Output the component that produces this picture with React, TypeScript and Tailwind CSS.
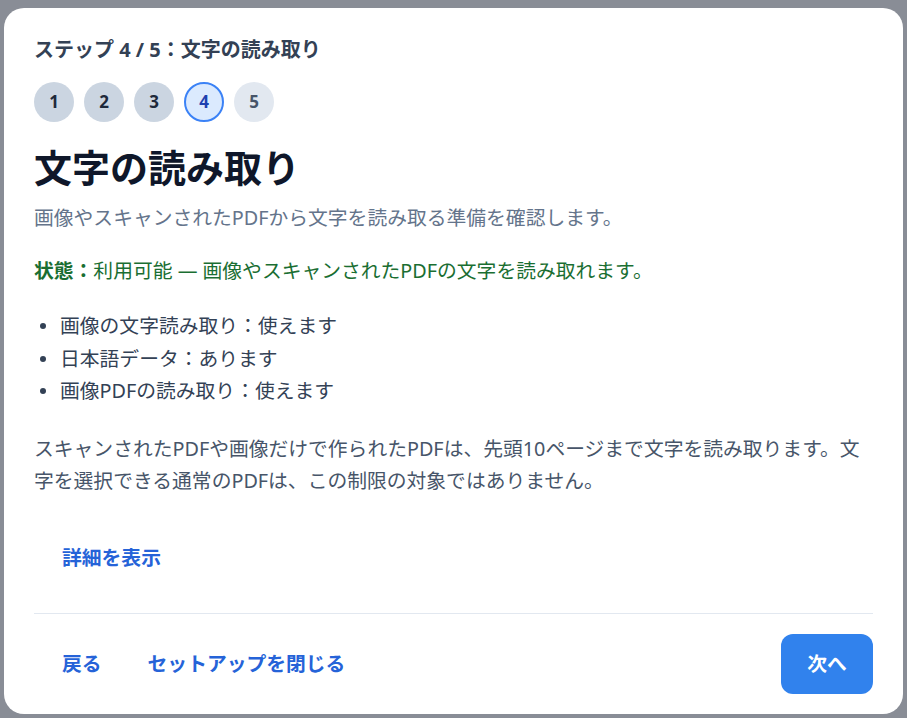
import React from "react";

const steps = [1, 2, 3, 4, 5];
const current = 4;

const checks = [
  "画像の文字読み取り：使えます",
  "日本語データ：あります",
  "画像PDFの読み取り：使えます",
];

function StepDot({ n }: { n: number }) {
  let cls = "bg-[#cbd5e1] text-[#1e293b]";
  if (n === current) cls = "bg-[#dbeafe] text-[#1e40af] border-2 border-[#3b82f6]";
  else if (n > current) cls = "bg-[#e2e8f0] text-[#475569]";
  return (
    <div
      className={`w-10 h-10 rounded-full flex items-center justify-center text-[17px] font-bold ${cls}`}
    >
      {n}
    </div>
  );
}

export default function App() {
  return (
    <div
      className="w-[907px] h-[718px] bg-[#898d96] pt-2 pl-1 overflow-hidden"
      style={{ fontFamily: '"Noto Sans", "Noto Sans CJK JP", sans-serif' }}
    >
      <div className="w-[899px] h-[706px] bg-white rounded-[20px] px-[30px] pt-[30px] pb-[21px] flex flex-col">
        <p className="text-[20px] leading-6 font-bold text-[#334155]">
          ステップ 4 / 5：文字の読み取り
        </p>

        <div className="flex gap-2.5 mt-5">
          {steps.map((n) => (
            <StepDot key={n} n={n} />
          ))}
        </div>

        <h1 className="mt-[23px] text-[38px] leading-[44px] font-bold text-[#0f172a]">
          文字の読み取り
        </h1>
        <p className="mt-[13px] text-[19.8px] leading-8 text-[#64748b]">
          画像やスキャンされたPDFから文字を読み取る準備を確認します。
        </p>

        <p className="mt-[21px] text-[19.8px] leading-8 text-[#1a6e32]">
          <span className="font-bold">状態：</span>利用可能 — 画像やスキャンされたPDFの文字を読み取れます。
        </p>

        <ul className="mt-[23px] text-[19.8px] leading-[32.5px] text-[#334155]">
          {checks.map((c) => (
            <li key={c} className="flex items-center">
              <span className="w-[6px] h-[6px] rounded-full bg-[#334155] ml-[6px] mr-[14px]" />
              {c}
            </li>
          ))}
        </ul>

        <p className="mt-[25px] text-[19.8px] leading-8 text-[#475569]">
          スキャンされたPDFや画像だけで作られたPDFは、先頭10ページまで文字を読み取ります。文字を選択できる通常のPDFは、この制限の対象ではありません。
        </p>

        <div className="mt-[37px] flex">
          <button className="ml-[14px] px-[14px] h-12 text-[19.8px] font-bold text-[#2563d8]">
            詳細を表示
          </button>
        </div>

        <div className="mt-[31px] h-px shrink-0 bg-[#e2e8f0]" />

        <div className="mt-[20px] flex items-center justify-between">
          <div className="flex gap-[18px] ml-[14px]">
            <button className="px-[14px] h-12 text-[19.8px] font-bold text-[#2563d8]">
              戻る
            </button>
            <button className="px-[14px] h-12 text-[19.8px] font-bold text-[#2563d8]">
              セットアップを閉じる
            </button>
          </div>
          <button className="w-[92px] h-[60px] rounded-xl bg-[#3182ed] text-white text-[19.8px] font-bold">
            次へ
          </button>
        </div>
      </div>
    </div>
  );
}
